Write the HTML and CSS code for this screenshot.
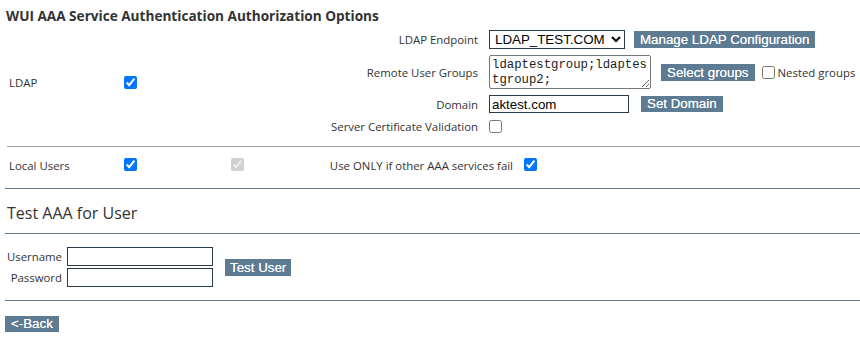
FILE: index.html
```html
<!DOCTYPE html>
<html>
<head>
<meta charset="utf-8">
<title>WUI AAA Service Authentication Authorization Options</title>
<link rel="stylesheet" href="styles.css">
</head>
<body>
<div class="page">
  <h1 class="title">WUI AAA Service Authentication Authorization Options</h1>

  <div class="row-ldap">
    <div class="lbl">LDAP</div>
    <div class="chk-cell"><input type="checkbox" class="chk" checked></div>
    <div class="settings">
      <label class="slbl">LDAP Endpoint</label>
      <div class="ctrl">
        <select class="sel"><option>LDAP_TEST.COM</option></select>
        <button class="btn btn-manage">Manage LDAP Configuration</button>
      </div>

      <label class="slbl">Remote User Groups</label>
      <div class="ctrl">
        <textarea class="ta">ldaptestgroup;ldaptestgroup2;</textarea>
        <button class="btn btn-select">Select groups</button>
        <input type="checkbox" class="chk chk-nested">
        <span class="txt">Nested groups</span>
      </div>

      <label class="slbl">Domain</label>
      <div class="ctrl">
        <input type="text" class="inp inp-domain" value="aktest.com">
        <button class="btn btn-domain">Set Domain</button>
      </div>

      <label class="slbl">Server Certificate Validation</label>
      <div class="ctrl">
        <input type="checkbox" class="chk">
      </div>
    </div>
  </div>

  <div class="row-local">
    <div class="lbl">Local Users</div>
    <div class="chk-cell"><input type="checkbox" class="chk" checked></div>
    <div class="dis-cell"><input type="checkbox" class="chk" checked disabled></div>
    <div class="txt only-txt">Use ONLY if other AAA services fail</div>
    <input type="checkbox" class="chk" checked>
  </div>

  <h2 class="sub">Test AAA for User</h2>

  <div class="test-form">
    <div class="fields">
      <label class="flbl">Username</label>
      <input type="text" class="inp inp-user">
      <label class="flbl">Password</label>
      <input type="password" class="inp inp-user">
    </div>
    <button class="btn btn-test">Test User</button>
  </div>

  <div class="back-row">
    <button class="btn btn-back">&lt;-Back</button>
  </div>
</div>
</body>
</html>
```

FILE: styles.css
```css
html, body {
  margin: 0;
  padding: 0;
  background: #ffffff;
}

body {
  font-family: "Open Sans", "Noto Sans", sans-serif;
  font-size: 11.4px;
  color: #333333;
}

.page {
  padding: 6px 0 0 5px;
}

.title {
  margin: 0 0 0 1px;
  font-size: 13.6px;
  font-weight: 700;
  line-height: 20px;
  color: #333333;
}

.row-ldap {
  display: flex;
  align-items: center;
  margin: 4px 0 0 2px;
  padding: 0 0 12px 2px;
  border-bottom: 1px solid #a3a3a3;
}

.lbl {
  width: 115px;
  line-height: 15px;
}

.chk-cell {
  width: 142px;
  display: flex;
}

.chk {
  margin: 0;
  width: 13px;
  height: 13px;
}

.settings {
  display: grid;
  grid-template-columns: 212px auto;
  grid-template-rows: 19px 34px 18px 15px;
  column-gap: 11px;
  row-gap: 6px;
  align-items: center;
}

.slbl {
  text-align: right;
  line-height: 15px;
}

.ctrl {
  display: flex;
  align-items: center;
}

.sel {
  width: 136px;
  height: 19px;
  margin: 0;
  padding: 0 0 0 1px;
  border: 1px solid #2d3a47;
  border-radius: 0;
  background: #ffffff;
  color: #000000;
  font-family: "Liberation Sans", Arial, sans-serif;
  font-size: 13.33px;
}

.btn {
  height: 17px;
  margin: 0;
  padding: 0 6px;
  border: none;
  border-radius: 0;
  background: #5d7b93;
  color: #ffffff;
  font-family: "Liberation Sans", Arial, sans-serif;
  font-size: 13.33px;
  line-height: 17px;
  text-shadow: 0 0 0.6px rgba(255, 255, 255, 0.9);
  cursor: pointer;
}

.btn-manage {
  margin-left: 9px;
}

.ta {
  box-sizing: border-box;
  width: 162px;
  height: 34px;
  margin: 0;
  padding: 2px 2px 0;
  border: 1px solid #767676;
  border-radius: 2px;
  font-family: "Liberation Mono", "DejaVu Sans Mono", monospace;
  font-size: 12.3px;
  line-height: 15px;
  color: #222222;
  overflow: hidden;
  resize: both;
}

.btn-select {
  margin-left: 10px;
}

.chk-nested {
  margin-left: 7px;
}

.txt {
  line-height: 15px;
}

.chk-nested + .txt {
  margin-left: 3px;
}

.inp {
  box-sizing: border-box;
  margin: 0;
  padding: 1px 2px;
  border: 1px solid #2d3a47;
  border-radius: 0;
  background: #ffffff;
  color: #000000;
  font-family: "Liberation Sans", Arial, sans-serif;
  font-size: 13.33px;
}

.inp-domain {
  width: 140px;
  height: 18px;
}

.btn-domain {
  margin-left: 12px;
  height: 16px;
  line-height: 16px;
}

.row-local {
  display: flex;
  align-items: flex-start;
  height: 30px;
  padding: 11px 0 0 4px;
  border-bottom: 1px solid #5d7b93;
}

.row-local .chk-cell {
  width: 107px;
}

.dis-cell {
  width: 75px;
  display: flex;
}

.only-txt {
  box-sizing: border-box;
  width: 218px;
  padding-right: 11px;
  text-align: right;
}

.sub {
  margin: 0;
  padding: 13px 0 9px 2px;
  font-size: 16px;
  font-weight: 400;
  line-height: 22px;
  color: #333333;
  border-bottom: 1px solid #5d7b93;
}

.test-form {
  display: flex;
  align-items: center;
  padding: 13px 0 13px 0;
  border-bottom: 1px solid #5d7b93;
}

.fields {
  display: grid;
  grid-template-columns: 57px 146px;
  column-gap: 5px;
  row-gap: 2px;
  align-items: center;
}

.flbl {
  text-align: right;
  line-height: 15px;
}

.inp-user {
  width: 146px;
  height: 19px;
}

.btn-test {
  margin-left: 12px;
  padding: 0 5px;
}

.back-row {
  padding-top: 15px;
}

.btn-back {
  height: 16px;
  line-height: 16px;
  padding: 0 6px;
}
```
